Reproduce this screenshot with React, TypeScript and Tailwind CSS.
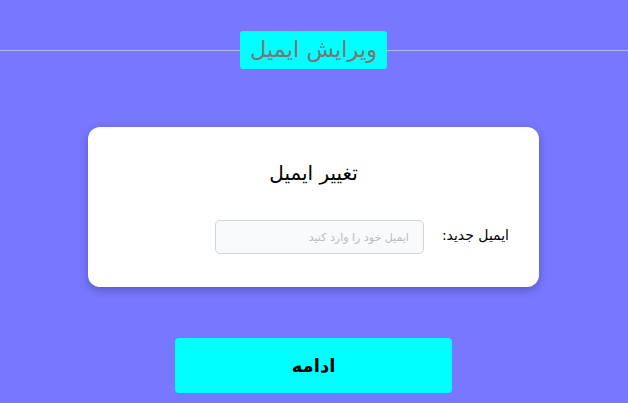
import React from "react";

export default function App() {
  return (
    <div dir="rtl" className="w-[628px] h-[403px] bg-[#7777ff] overflow-hidden flex flex-col items-center pr-px" style={{ fontFamily: '"DejaVu Sans", sans-serif' }}>
      <div className="relative w-full h-[70px] flex items-start justify-center pt-[31px]">
        <div className="absolute left-0 right-[-1px] top-[50px] h-px bg-[#a9b9ff]"></div>
        <div className="relative bg-[#00ffff] rounded-[3px] h-[38px] w-[147px] flex items-center justify-center text-[22.5px] text-[#777777]">
          ویرایش ایمیل
        </div>
      </div>
      <div className="mt-[57px] w-[451px] h-[160px] bg-white rounded-[12px] shadow-[0_3px_8px_rgba(0,0,0,0.25)] flex flex-col items-center">
        <div className="mt-[36px] text-[20px] text-black leading-none">تغییر ایمیل</div>
        <div className="mt-[37px] self-start mr-[30px] flex items-center gap-[18px]">
          <div className="text-[14px] text-black -mt-[3px]">ایمیل جدید:</div>
          <input
            placeholder="ایمیل خود را وارد کنید"
            className="w-[209px] h-[34px] bg-[#f9fafb] border border-[#d1d5db] rounded-[5px] px-[14px] text-[11px] placeholder:text-[#b8bcc4] outline-none"
          />
        </div>
      </div>
      <button className="mt-[51px] w-[277px] h-[55px] bg-[#00ffff] rounded-[4px] text-[18px] font-bold text-black">
        ادامه
      </button>
    </div>
  );
}
